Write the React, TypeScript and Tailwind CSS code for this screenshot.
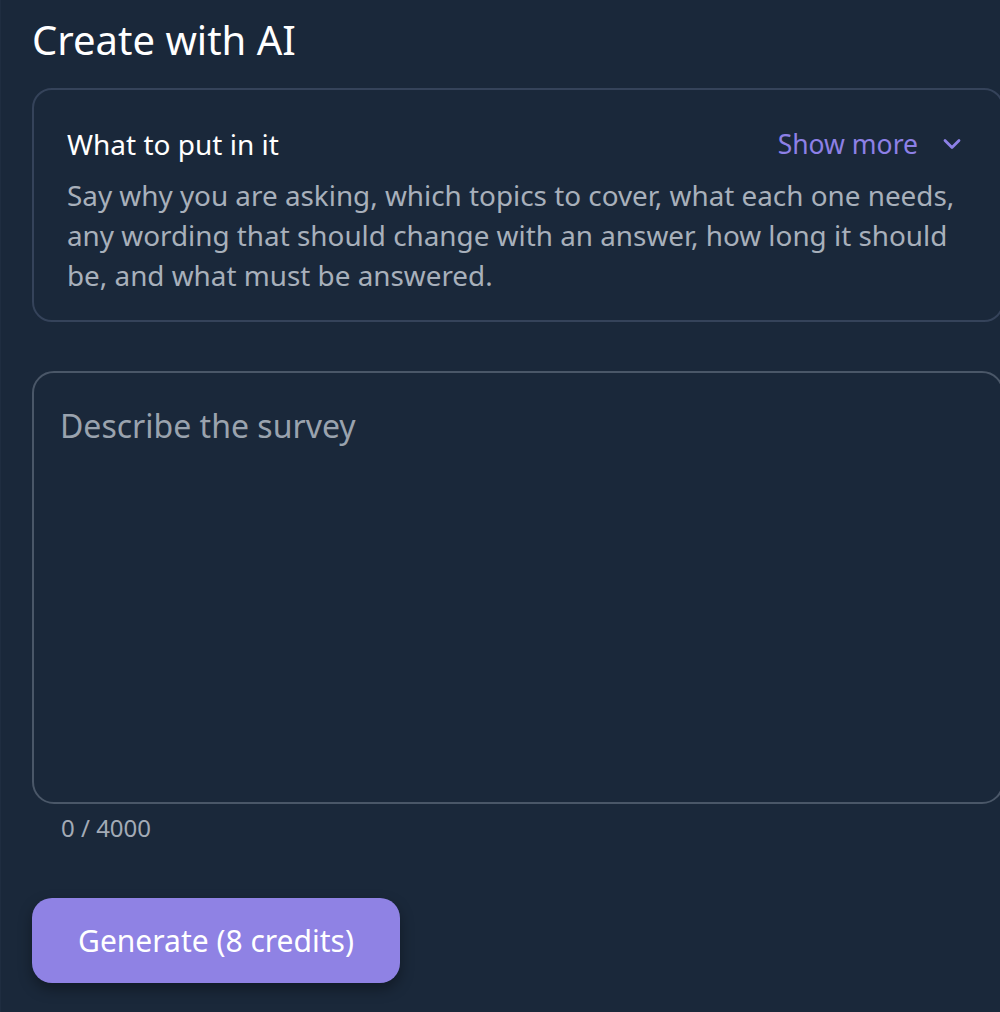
import { ChevronDown } from "lucide-react";

export default function App() {
  return (
    <div
      className="h-[1012px] w-[1000px] overflow-hidden border-l border-[#1f2d40] bg-[#1a283a]"
      style={{ fontFamily: '"Noto Sans", "Open Sans", sans-serif' }}
    >
      <div className="w-[1003px] pl-[31px]">
        <h1 className="pt-[14px] text-[40px] leading-[52px] text-white">Create with AI</h1>

        <div className="mt-[22px] rounded-[20px] border-2 border-[#35435a] pb-[25px] pl-[33px] pr-[36px] pt-[34px]">
          <div className="flex items-center justify-between">
            <p className="text-[28px] leading-[40px] text-white">What to put in it</p>
            <button className="flex items-center gap-[20px] text-[26.5px] leading-[40px] text-[#8d80e6]">
              Show more
              <ChevronDown className="h-[28px] w-[28px]" strokeWidth={2.4} />
            </button>
          </div>
          <p className="mt-[11px] text-[27.85px] leading-[40px] text-[#a8b0bb]">
            Say why you are asking, which topics to cover, what each one needs, any wording that
            should change with an answer, how long it should be, and what must be answered.
          </p>
        </div>

        <div className="mt-[49px] h-[433px] rounded-[22px] border-2 border-[#4a5768] px-[26px] pt-[31px]">
          <p className="text-[32px] leading-[44px] text-[#9aa3ae]">Describe the survey</p>
        </div>
        <p className="mt-[9px] pl-[29px] text-[24px] leading-[30px] text-[#a3abb6]">0 / 4000</p>

        <button className="mt-[55px] h-[85px] w-[368px] rounded-[20px] bg-[#8f82e4] text-[30px] text-white shadow-[0_6px_14px_rgba(0,0,0,0.35)]">
          Generate (8 credits)
        </button>
      </div>
    </div>
  );
}
